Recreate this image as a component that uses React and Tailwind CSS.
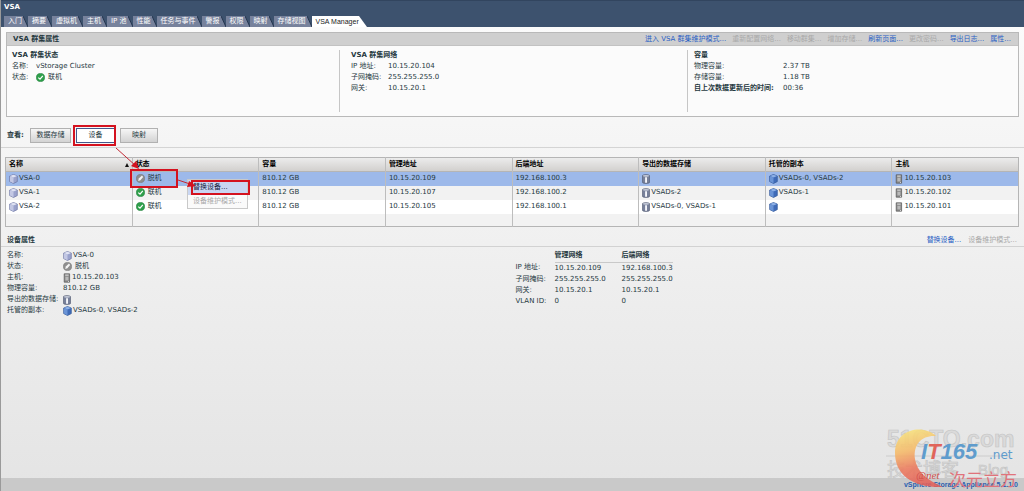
import React from "react";

const VmIcon = ({ tone = "light" }) => (
  <svg className="block h-[10px] w-[9px] shrink-0" viewBox="0 0 9 10" aria-hidden="true">
    <path d="M4.5 .5 8.3 2v5.6L4.5 9.5.7 7.6V2Z" fill={tone === "light" ? "#9aa2cc" : "#3f6bb8"} stroke={tone === "light" ? "#6a72a2" : "#2f5698"} strokeWidth=".7" />
    <path d="M.9 2 4.5 3.5 8.1 2 4.5.8Z" fill={tone === "light" ? "#dfe2f3" : "#8db0e6"} />
    <path d="M4.5 3.6V9.2L1 7.4V2.3Z" fill={tone === "light" ? "#c3c8e4" : "#6a94d6"} />
  </svg>
);

const StoreIcon = () => (
  <svg className="block h-[10px] w-[8px] shrink-0" viewBox="0 0 8 10" aria-hidden="true">
    <path d="M.5 1.6C.5.3 7.5.3 7.5 1.6v6.8c0 1.3-7 1.3-7 0Z" fill="#77809a" stroke="#4d556d" strokeWidth=".6" />
    <ellipse cx="4" cy="1.8" rx="3.2" ry=".9" fill="#c6cbd9" />
    <path d="M3.1 3.2h1.9v5.6H3.1Z" fill="#f4f6fb" />
  </svg>
);

const HostIcon = () => (
  <svg className="block h-[10px] w-[8px] shrink-0" viewBox="0 0 8 10" aria-hidden="true">
    <path d="M1.2.8h5.4v8.4H1.2Z" fill="#8b8b8b" stroke="#555" strokeWidth=".7" />
    <path d="M2.2 1.6h3.4v1H2.2Z" fill="#e4e4e4" />
    <path d="M2.4 3.8h3v3.6h-3Z" fill="#b9b9b9" />
    <path d="M5 8h1v.8H5Z" fill="#eee" />
  </svg>
);

const OkIcon = () => (
  <svg className="block h-[9px] w-[9px] shrink-0" viewBox="0 0 9 9" aria-hidden="true">
    <circle cx="4.5" cy="4.5" r="4.1" fill="#2fa04b" stroke="#1f7f3a" strokeWidth=".6" />
    <path d="M2.3 4.6 4 6.2 6.8 2.8" fill="none" stroke="#fff" strokeWidth="1.2" />
  </svg>
);

const OffIcon = () => (
  <svg className="block h-[9px] w-[9px] shrink-0" viewBox="0 0 9 9" aria-hidden="true">
    <circle cx="4.5" cy="4.5" r="4.1" fill="#8f8f8f" stroke="#777" strokeWidth=".6" />
    <path d="M2.2 7 2.8 4.6 6 1.6 7.2 2.9 4.4 6.2Z" fill="#f5f5f5" />
  </svg>
);

const Status = ({ ok }) => (
  <span className="flex items-center gap-[3px]">
    {ok ? <OkIcon /> : <OffIcon />}
    {ok ? "联机" : "脱机"}
  </span>
);

const WithIcon = ({ icon, children }) => (
  <span className="flex items-center gap-px">
    {icon}
    {children}
  </span>
);

const Action = ({ off, children }) => (
  <button type="button" disabled={off} className="cursor-pointer text-[#2a5fc4] disabled:cursor-default disabled:text-[#a9a9a9]">
    {children}
  </button>
);

const tabs = ["入门", "摘要", "虚拟机", "主机", "IP 池", "性能", "任务与事件", "警报", "权限", "映射", "存储视图"];

const Tab = ({ children }) => (
  <button type="button" className="flex h-[11px] items-end">
    <span className="flex h-[11px] items-center bg-[#77829c] pl-[4px] pr-px text-white">{children}</span>
    <svg className="block h-[11px] w-[5px]" viewBox="0 0 5 11" aria-hidden="true">
      <path d="M0 0 5 11H0Z" fill="#77829c" />
      <path d="M0 0 5 11" stroke="#26364f" strokeWidth="1" />
    </svg>
  </button>
);

const columns = ["名称", "状态", "容量", "管理地址", "后端地址", "导出的数据存储", "托管的副本", "主机"];

const devices = [
  { name: "VSA-0", ok: false, mgmt: "10.15.20.109", back: "192.168.100.3", stores: "", replicas: "VSADs-0, VSADs-2", host: "10.15.20.103" },
  { name: "VSA-1", ok: true, mgmt: "10.15.20.107", back: "192.168.100.2", stores: "VSADs-2", replicas: "VSADs-1", host: "10.15.20.102" },
  { name: "VSA-2", ok: true, mgmt: "10.15.20.105", back: "192.168.100.1", stores: "VSADs-0, VSADs-1", replicas: "", host: "10.15.20.101" },
];

const Facts = ({ rows, cols }) => (
  <dl className={`grid ${cols} auto-rows-[11px] items-center`}>
    {rows.map(([k, v, strong]) => (
      <React.Fragment key={k}>
        <dt className={strong ? "font-bold" : ""}>{k}</dt>
        <dd>{v}</dd>
      </React.Fragment>
    ))}
  </dl>
);

const cell = "border-l border-[#bdbdbd] px-[3px] py-0 first:border-l-0";

const viewButton = "h-[15px] border border-[#b1b1b1] bg-linear-to-b from-[#f6f6f6] to-[#d3d3d3] text-center";

function DeviceTable() {
  return (
    <div className="relative">
      <table className="w-full table-fixed border-collapse border border-[#b5b5b5] bg-white">
        <thead>
          <tr className="h-[14px] border-b border-[#b5b5b5] bg-linear-to-b from-[#ececec] to-[#d2d0ce] text-left text-black">
            {columns.map((c, i) => (
              <th key={c} scope="col" className={cell}>
                <span className="flex items-center justify-between">
                  {c}
                  {i === 0 && (
                    <svg className="h-[4px] w-[4px]" viewBox="0 0 4 4" aria-hidden="true">
                      <path d="M2 0 4 4H0Z" fill="#111" />
                    </svg>
                  )}
                </span>
              </th>
            ))}
          </tr>
        </thead>
        <tbody>
          {devices.map((d, i) => (
            <tr key={d.name} className={i === 0 ? "h-[14px] bg-[#9db9ea]" : i === 1 ? "h-[14px] bg-[#f2f2f2]" : "h-[14px] bg-white"}>
              <td className={cell}><WithIcon icon={<VmIcon />}>{d.name}</WithIcon></td>
              <td className={cell}><Status ok={d.ok} /></td>
              <td className={cell}>810.12 GB</td>
              <td className={cell}>{d.mgmt}</td>
              <td className={cell}>{d.back}</td>
              <td className={cell}><WithIcon icon={<StoreIcon />}>{d.stores}</WithIcon></td>
              <td className={cell}><WithIcon icon={<VmIcon tone="dark" />}>{d.replicas}</WithIcon></td>
              <td className={cell}><WithIcon icon={<HostIcon />}>{d.host}</WithIcon></td>
            </tr>
          ))}
          <tr className="h-[13px] bg-[#f2f2f2]">
            {columns.map((c) => <td key={c} className={cell} />)}
          </tr>
        </tbody>
      </table>
      <div className="absolute left-[182px] top-[22px] w-[61px] border border-[#c9c9c9] bg-[#fafafa]">
        <button type="button" className="block h-[15px] w-full bg-[#c9d6f2] pl-[5px] text-left text-[#16233f]">替换设备...</button>
        <button type="button" disabled className="block h-[13px] w-full pl-[5px] text-left text-[#a9a9a9]">设备维护模式...</button>
      </div>
    </div>
  );
}

const Callouts = () => (
  <svg className="pointer-events-none absolute left-0 top-0 h-[230px] w-[260px]" viewBox="0 0 260 230" fill="none" aria-hidden="true">
    <g stroke="#d4121f" strokeWidth="2">
      <path d="M73 126h41v19H73Z" />
      <path d="M130 170h46v17h-46Z" />
      <path d="M191 181h57v13h-57Z" />
    </g>
    <g stroke="#c22a35" strokeWidth="1">
      <path d="M115 148 135 166" />
      <path d="M177 180 189 184" />
    </g>
    <path d="M138 169 130 166 135 161ZM195 186 186 187 188 181Z" fill="#d4121f" />
  </svg>
);

const Watermark = () => (
  <svg className="pointer-events-none absolute bottom-0 right-0 h-[69px] w-[140px]" viewBox="0 0 140 69" aria-hidden="true">
    <defs>
      <linearGradient id="flame" x1=".3" y1="0" x2=".5" y2="1">
        <stop offset="0" stopColor="#f8e27c" />
        <stop offset=".35" stopColor="#f5b968" />
        <stop offset=".65" stopColor="#ec7a5e" />
        <stop offset="1" stopColor="#e2605a" />
      </linearGradient>
    </defs>
    <g fill="#dadada" stroke="#c4c4c4" strokeWidth=".6" fontFamily="Liberation Sans, Noto Sans CJK SC, sans-serif">
      <text x="3" y="25" fontSize="23" fontWeight="bold">51CTO.com</text>
      <text x="3" y="54" fontSize="18">技术博客</text>
      <text x="94" y="53" fontSize="15">Blog</text>
    </g>
    <path d="M2 34h124" stroke="#cccccc" />
    <path d="M52 14C40 2 11 6 11 31c0 22 18 35 48 34C42 58 33 49 31 37 29 22 38 13 52 14Z" fill="url(#flame)" opacity=".88" />
    <text x="37" y="37" fontSize="22" fontWeight="bold" fontStyle="italic" fill="#5f9ccd" fontFamily="Liberation Sans, sans-serif">I<tspan fill="#e0655a">T</tspan>165</text>
    <text x="105" y="37" fontSize="12" fill="#5f9ccd" fontFamily="DejaVu Sans, sans-serif">.net</text>
    <text x="32" y="57" fontSize="11" fontStyle="italic" fill="#d0504a" fontFamily="Liberation Serif, serif">@net</text>
    <text x="65" y="64" fontSize="17" fill="#e0737b" fontFamily="Noto Sans CJK SC, sans-serif">次元立方</text>
  </svg>
);

export default function App() {
  return (
    <div className="relative flex min-h-screen flex-col border-l border-[#9a9a9a] bg-linear-to-b from-[#fcfcfc] to-[#e4e4e4] font-['DejaVu_Sans','Noto_Sans_CJK_SC',sans-serif] text-[7px] leading-[11px] text-[#26393f]">
      <header className="flex h-[27px] flex-col justify-between border-t border-[#32455f] bg-[#3d526e]">
        <h1 className="pl-[3px] pt-px font-bold text-white">VSA</h1>
        <nav className="flex pl-[3px]">
          {tabs.map((t) => <Tab key={t}>{t}</Tab>)}
          <button type="button" className="flex h-[11px]">
            <span className="flex h-[11px] items-center bg-white pl-[4px] font-['Liberation_Sans',sans-serif] text-[#222]">VSA Manager</span>
            <svg className="block h-[11px] w-[8px]" viewBox="0 0 8 11" aria-hidden="true">
              <path d="M0 0 8 11H0Z" fill="#fff" />
            </svg>
          </button>
        </nav>
      </header>

      <main className="grow">
        <section className="mx-[5px] mt-[5px] border border-[#b9b9b9] bg-[#fbfbfb]">
          <div className="flex h-[13px] items-center justify-between border-b border-[#c2c2c2] bg-[#cfcfcf] pl-[6px] pr-[7px]">
            <h2 className="font-bold">VSA 群集属性</h2>
            <div className="flex gap-[6px]">
              <Action>进入 VSA 群集维护模式...</Action>
              <Action off>重新配置网络...</Action>
              <Action off>移动群集...</Action>
              <Action off>增加存储...</Action>
              <Action>刷新页面...</Action>
              <Action off>更改密码...</Action>
              <Action>导出日志...</Action>
              <Action>属性...</Action>
            </div>
          </div>
          <div className="grid h-[70px] grid-cols-[332fr_348fr_331fr] py-[4px]">
            <div className="pl-[5px]">
              <h3 className="font-bold">VSA 群集状态</h3>
              <Facts cols="grid-cols-[24px_auto] justify-start" rows={[["名称:", "vStorage Cluster"], ["状态:", <Status ok />]]} />
            </div>
            <div className="border-l border-[#c6c6c6] pl-[11px]">
              <h3 className="font-bold">VSA 群集网络</h3>
              <Facts cols="grid-cols-[37px_auto] justify-start" rows={[["IP 地址:", "10.15.20.104"], ["子网掩码:", "255.255.255.0"], ["网关:", "10.15.20.1"]]} />
            </div>
            <div className="border-l border-[#c6c6c6] pl-[6px]">
              <h3 className="font-bold">容量</h3>
              <Facts cols="grid-cols-[89px_auto] justify-start" rows={[["物理容量:", "2.37 TB"], ["存储容量:", "1.18 TB"], ["自上次数据更新后的时间:", "00:36", true]]} />
            </div>
          </div>
        </section>

        <div className="mt-[8px] flex items-center border-b border-[#d4d4d4] pb-[4px] pl-[6px] pt-[3px]">
          <span className="w-[23px] font-bold">查看:</span>
          <div className="flex gap-[5px]">
            <button type="button" className={`${viewButton} w-[41px]`}>数据存储</button>
            <button type="button" className="h-[15px] w-[39px] border border-[#44598c] bg-white text-center">设备</button>
            <button type="button" className={`${viewButton} w-[38px]`}>映射</button>
          </div>
        </div>

        <section className="mr-[5px] ml-[4px] mt-[9px]">
          <DeviceTable />
        </section>

        <section className="mt-[8px]">
          <div className="flex items-center justify-between border-b border-[#d2d2d2] pl-[6px] pr-[7px]">
            <h2 className="font-bold">设备属性</h2>
            <div className="flex gap-[7px]">
              <Action>替换设备...</Action>
              <Action off>设备维护模式...</Action>
            </div>
          </div>
          <div className="grid grid-cols-2 pl-[6px] pt-[3px]">
            <Facts
              cols="grid-cols-[56px_auto] justify-start"
              rows={[
                ["名称:", <WithIcon icon={<VmIcon />}>VSA-0</WithIcon>],
                ["状态:", <Status />],
                ["主机:", <WithIcon icon={<HostIcon />}>10.15.20.103</WithIcon>],
                ["物理容量:", "810.12 GB"],
                ["导出的数据存储:", <StoreIcon />],
                ["托管的副本:", <WithIcon icon={<VmIcon tone="dark" />}>VSADs-0, VSADs-2</WithIcon>],
              ]}
            />
            <table className="w-[157px] table-fixed self-start text-left">
              <thead>
                <tr className="h-[12px]">
                  <td className="w-[39px] p-0" />
                  <th scope="col" className="w-[67px] border-b border-[#c9c9c9] p-0">管理网络</th>
                  <th scope="col" className="border-b border-[#c9c9c9] p-0">后端网络</th>
                </tr>
              </thead>
              <tbody>
                {[["IP 地址:", "10.15.20.109", "192.168.100.3"], ["子网掩码:", "255.255.255.0", "255.255.255.0"], ["网关:", "10.15.20.1", "10.15.20.1"], ["VLAN ID:", "0", "0"]].map(([k, a, b]) => (
                  <tr key={k} className="h-[11px]">
                    <th scope="row" className="p-0 font-normal">{k}</th>
                    <td className="p-0">{a}</td>
                    <td className="p-0">{b}</td>
                  </tr>
                ))}
              </tbody>
            </table>
          </div>
        </section>
      </main>

      <footer className="flex h-[13px] items-center justify-end bg-[#c9c9c9] pr-[6px] font-['Liberation_Sans',sans-serif] font-bold text-[#2a5fb0]">vSphere Storage Appliance 5.1.1.0</footer>
      <Callouts />
      <Watermark />
    </div>
  );
}
